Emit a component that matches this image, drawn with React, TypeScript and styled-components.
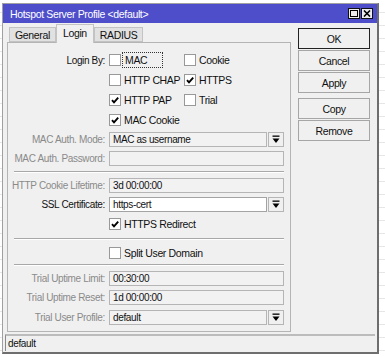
import React from "react";
import styled, { createGlobalStyle } from "styled-components";

const GlobalStyle = createGlobalStyle`
  html, body { margin: 0; padding: 0; }
  body {
    width: 385px;
    height: 357px;
    overflow: hidden;
    background: #fff repeating-linear-gradient(to bottom, transparent 0 12px, #e6e6e6 12px 13px);
    font-family: "Liberation Sans", Arial, sans-serif;
    font-size: 10px;
    letter-spacing: -0.35px;
    color: #111;
  }
`;

const Page = styled.div`
  padding: 3px 0 0 2px;
`;

const Window = styled.div`
  box-sizing: border-box;
  width: 377px;
  height: 351px;
  border: 1px solid #a0a0a0;
  border-right: 2px solid #6e6e6e;
  border-bottom: 2px solid #6e6e6e;
  background: #f0f0f0;
  display: flex;
  flex-direction: column;
`;

const TitleBar = styled.div`
  height: 19px;
  background: #4e4ecb;
  color: #fff;
  display: flex;
  align-items: center;
  padding: 0 4px 0 7px;
`;

const TitleText = styled.span`
  font-size: 10.5px;
`;

const TitleButtons = styled.div`
  margin-left: auto;
  display: flex;
  gap: 1px;
`;

const TitleButton = styled.div`
  box-sizing: border-box;
  width: 12px;
  height: 11px;
  border: 1px solid #111;
  background: #ececec;
  display: flex;
  align-items: center;
  justify-content: center;
`;

const Main = styled.div`
  display: flex;
  padding: 1px 0 0 4px;
  height: 309px;
  box-sizing: border-box;
`;

const LeftCol = styled.div`
  width: 284px;
  display: flex;
  flex-direction: column;
`;

const TabStrip = styled.div`
  display: flex;
  align-items: flex-end;
  height: 18px;
  padding-left: 2px;
`;

const Tab = styled.div<{ $active?: boolean }>`
  box-sizing: border-box;
  height: ${(p) => (p.$active ? "19px" : "15px")};
  margin-bottom: ${(p) => (p.$active ? "-1px" : "0")};
  padding: 0 ${(p) => (p.$active ? "6px" : "5px")};
  background: ${(p) => (p.$active ? "#f0f0f0" : "#e1e1e1")};
  border: 1px solid #c3c3c3;
  border-bottom: ${(p) => (p.$active ? "none" : "1px solid #c3c3c3")};
  display: flex;
  align-items: center;
  font-size: 10.5px;
  position: relative;
  z-index: ${(p) => (p.$active ? 1 : 0)};
  padding-bottom: ${(p) => (p.$active ? "3px" : "0")};
`;

const Panel = styled.div`
  box-sizing: border-box;
  height: 290px;
  border: 1px solid #b4b4b4;
  background: #f0f0f0;
  padding: 7px 6px 0 0;
  display: flex;
  flex-direction: column;
`;

const Row = styled.div<{ $h: number }>`
  height: ${(p) => p.$h}px;
  display: flex;
  align-items: center;
  flex-shrink: 0;
`;

const Label = styled.div<{ $disabled?: boolean }>`
  width: 97px;
  margin-right: 4px;
  text-align: right;
  white-space: nowrap;
  color: ${(p) => (p.$disabled ? "#8a8a8a" : "#111")};
  flex-shrink: 0;
`;

const Spacer = styled.div`
  width: 101px;
  flex-shrink: 0;
`;

const CheckCell = styled.div<{ $w?: number }>`
  display: flex;
  align-items: center;
  width: ${(p) => (p.$w ? `${p.$w}px` : "auto")};
  flex-shrink: 0;
`;

const Box = styled.div`
  box-sizing: border-box;
  width: 12px;
  height: 12px;
  border: 1px solid #999;
  background: #fff;
  display: flex;
  align-items: center;
  justify-content: center;
  flex-shrink: 0;
`;

const CheckText = styled.span<{ $focus?: boolean }>`
  margin-left: ${(p) => (p.$focus ? "1px" : "3px")};
  padding: ${(p) => (p.$focus ? "1px 15px 1px 2px" : "0")};
  border: ${(p) => (p.$focus ? "1px dotted #333" : "none")};
  font-size: 10.5px;
  white-space: nowrap;
`;

const Field = styled.div<{ $disabled?: boolean }>`
  box-sizing: border-box;
  flex: 1;
  height: 15px;
  border: 1px solid ${(p) => (p.$disabled ? "#b5b5b5" : "#a3a3a3")};
  background: ${(p) => (p.$disabled ? "#f2f2f2" : "#fff")};
  display: flex;
  align-items: center;
  padding-left: 3px;
  white-space: nowrap;
  color: #111;
`;

const DropButton = styled.div`
  box-sizing: border-box;
  width: 16px;
  height: 15px;
  margin-left: 1px;
  border: 1px solid #b5b5b5;
  background: #f0f0f0;
  display: flex;
  align-items: center;
  justify-content: center;
  flex-shrink: 0;
`;

const Separator = styled.div<{ $h: number }>`
  height: ${(p) => p.$h}px;
  display: flex;
  align-items: center;
  padding-left: 6px;
  flex-shrink: 0;
  &::after {
    content: "";
    flex: 1;
    height: 0;
    border-top: 1px solid #a8a8a8;
    border-bottom: 1px solid #fff;
  }
`;

const RightCol = styled.div`
  width: 72px;
  margin-left: 7px;
  padding-top: 4px;
  display: flex;
  flex-direction: column;
`;

const Button = styled.div<{ $default?: boolean; $gap?: number }>`
  box-sizing: border-box;
  height: 21px;
  margin-bottom: ${(p) => p.$gap ?? 1}px;
  border: 1px solid ${(p) => (p.$default ? "#222" : "#a6a6a6")};
  background: #f0f0f0;
  display: flex;
  align-items: center;
  justify-content: center;
  font-size: 10.5px;
`;

const StatusBar = styled.div`
  box-sizing: border-box;
  margin: 2px 2px 0 2px;
  height: 17px;
  border-top: 2px solid #bcbcbc;
  border-left: 1px solid #8a8a8a;
  display: flex;
  align-items: center;
  padding-left: 2px;
`;

const CheckMark = () => (
  <svg width="10" height="10" viewBox="0 0 10 10">
    <path d="M2 5.2 L4 7.4 L8.2 2.6" fill="none" stroke="#000" strokeWidth="1.9" />
  </svg>
);

const DropIcon = () => (
  <svg width="8" height="9" viewBox="0 0 8 9">
    <rect x="0.5" y="0.5" width="7" height="1.3" fill="#000" />
    <path d="M0.5 3.5 H7.5 L4 8 Z" fill="#000" />
  </svg>
);

const Check: React.FC<{ checked?: boolean; label: string; w?: number; focus?: boolean }> = ({
  checked,
  label,
  w,
  focus,
}) => (
  <CheckCell $w={w}>
    <Box>{checked && <CheckMark />}</Box>
    <CheckText $focus={focus}>{label}</CheckText>
  </CheckCell>
);

const FieldRow: React.FC<{ label: string; value: string; disabled?: boolean; drop?: boolean; h: number }> = ({
  label,
  value,
  disabled,
  drop,
  h,
}) => (
  <Row $h={h}>
    <Label $disabled={disabled}>{label}</Label>
    <Field $disabled={disabled}>{value}</Field>
    {drop && (
      <DropButton>
        <DropIcon />
      </DropButton>
    )}
  </Row>
);

export default function App() {
  return (
    <>
      <GlobalStyle />
      <Page>
        <Window>
          <TitleBar>
            <TitleText>Hotspot Server Profile &lt;default&gt;</TitleText>
            <TitleButtons>
              <TitleButton>
                <svg width="8" height="7" viewBox="0 0 8 7">
                  <rect x="0.5" y="0.5" width="7" height="6" fill="none" stroke="#000" strokeWidth="1" />
                </svg>
              </TitleButton>
              <TitleButton>
                <svg width="8" height="7" viewBox="0 0 8 7">
                  <path d="M1 0.5 L7 6.5 M7 0.5 L1 6.5" stroke="#000" strokeWidth="1.6" />
                </svg>
              </TitleButton>
            </TitleButtons>
          </TitleBar>
          <Main>
            <LeftCol>
              <TabStrip>
                <Tab>General</Tab>
                <Tab $active>Login</Tab>
                <Tab>RADIUS</Tab>
              </TabStrip>
              <Panel>
                <Row $h={20}>
                  <Label>Login By:</Label>
                  <Check label="MAC" w={75} focus />
                  <Check label="Cookie" />
                </Row>
                <Row $h={20}>
                  <Spacer />
                  <Check label="HTTP CHAP" w={75} />
                  <Check label="HTTPS" checked />
                </Row>
                <Row $h={20}>
                  <Spacer />
                  <Check label="HTTP PAP" w={75} checked />
                  <Check label="Trial" />
                </Row>
                <Row $h={20}>
                  <Spacer />
                  <Check label="MAC Cookie" checked />
                </Row>
                <FieldRow h={19} label="MAC Auth. Mode:" value="MAC as username" disabled drop />
                <FieldRow h={19} label="MAC Auth. Password:" value="" disabled />
                <Separator $h={8} />
                <FieldRow h={19} label="HTTP Cookie Lifetime:" value="3d 00:00:00" disabled />
                <FieldRow h={19} label="SSL Certificate:" value="https-cert" drop />
                <Row $h={20}>
                  <Spacer />
                  <Check label="HTTPS Redirect" checked />
                </Row>
                <Separator $h={10} />
                <Row $h={17}>
                  <Spacer />
                  <Check label="Split User Domain" />
                </Row>
                <Separator $h={8} />
                <FieldRow h={19} label="Trial Uptime Limit:" value="00:30:00" disabled />
                <FieldRow h={19} label="Trial Uptime Reset:" value="1d 00:00:00" disabled />
                <FieldRow h={20} label="Trial User Profile:" value="default" disabled drop />
              </Panel>
            </LeftCol>
            <RightCol>
              <Button $default>OK</Button>
              <Button>Cancel</Button>
              <Button $gap={5}>Apply</Button>
              <Button>Copy</Button>
              <Button>Remove</Button>
            </RightCol>
          </Main>
          <StatusBar>default</StatusBar>
        </Window>
      </Page>
    </>
  );
}
